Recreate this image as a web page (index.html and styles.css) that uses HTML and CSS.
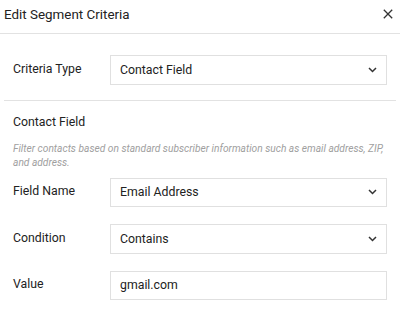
FILE: index.html
```html
<!DOCTYPE html>
<html>
<head>
<meta charset="utf-8">
<link rel="stylesheet" href="styles.css">
</head>
<body>
<div class="modal">
  <div class="modal-header">
    <div class="modal-title">Edit Segment Criteria</div>
    <button class="close" aria-label="Close">
      <svg width="10" height="10" viewBox="0 0 10 10"><path d="M0.8 0.8 L9.2 9.2 M9.2 0.8 L0.8 9.2" stroke="#333" stroke-width="1.3" fill="none"/></svg>
    </button>
  </div>
  <div class="modal-body">
    <div class="row first">
      <div class="label">Criteria Type</div>
      <div class="control select"><span>Contact Field</span>
        <svg class="chev" width="9" height="6" viewBox="0 0 9 6"><path d="M1 1 L4.5 4.5 L8 1" stroke="#333" stroke-width="1.5" fill="none"/></svg>
      </div>
    </div>
    <hr class="divider">
    <div class="section-title">Contact Field</div>
    <div class="desc">Filter contacts based on standard subscriber information such as email address, ZIP, and address.</div>
    <div class="row">
      <div class="label">Field Name</div>
      <div class="control select"><span>Email Address</span>
        <svg class="chev" width="9" height="6" viewBox="0 0 9 6"><path d="M1 1 L4.5 4.5 L8 1" stroke="#333" stroke-width="1.5" fill="none"/></svg>
      </div>
    </div>
    <div class="row">
      <div class="label">Condition</div>
      <div class="control select"><span>Contains</span>
        <svg class="chev" width="9" height="6" viewBox="0 0 9 6"><path d="M1 1 L4.5 4.5 L8 1" stroke="#333" stroke-width="1.5" fill="none"/></svg>
      </div>
    </div>
    <div class="row">
      <div class="label">Value</div>
      <div class="control"><span>gmail.com</span></div>
    </div>
  </div>
</div>
</body>
</html>
```
FILE: styles.css
```css
html, body {
  margin: 0;
  padding: 0;
  background: #fff;
}
body {
  font-family: Roboto, "Liberation Sans", sans-serif;
  color: #222;
  width: 400px;
  height: 313px;
  overflow: hidden;
}
.modal-header {
  height: 34px;
  border-bottom: 1px solid #e2e2e2;
  display: flex;
  align-items: center;
  justify-content: space-between;
  padding: 0 7px 5px 4px;
  box-sizing: border-box;
}
.modal-title {
  font-size: 13.4px;
  color: #222;
}
.close {
  border: 0;
  background: none;
  padding: 0;
  width: 10px;
  height: 10px;
  display: flex;
}
.modal-body {
  padding: 0 13px;
}
.row {
  display: flex;
  align-items: center;
  margin-top: 17px;
}
.row.first {
  margin-top: 21px;
}
.label {
  width: 97px;
  flex: none;
  font-size: 12.3px;
  color: #222;
  margin-top: -2px;
}
.control {
  flex: 1;
  height: 29.5px;
  box-sizing: border-box;
  border: 1px solid #e0e0e0;
  display: flex;
  align-items: center;
  justify-content: space-between;
  padding: 0 9px 0 9px;
  font-size: 12.3px;
  color: #222;
}
.chev {
  display: block;
}
.divider {
  border: 0;
  border-top: 1px solid #e2e2e2;
  margin: 15px -9px 0 -9px;
  height: 0;
}
.section-title {
  font-size: 12.3px;
  margin-top: 12px;
  line-height: 18px;
  color: #222;
}
.desc {
  font-size: 10.2px;
  font-style: italic;
  color: #a0a0a0;
  line-height: 14px;
  margin-top: 11px;
}
.desc + .row {
  margin-top: 8px;
}
```
